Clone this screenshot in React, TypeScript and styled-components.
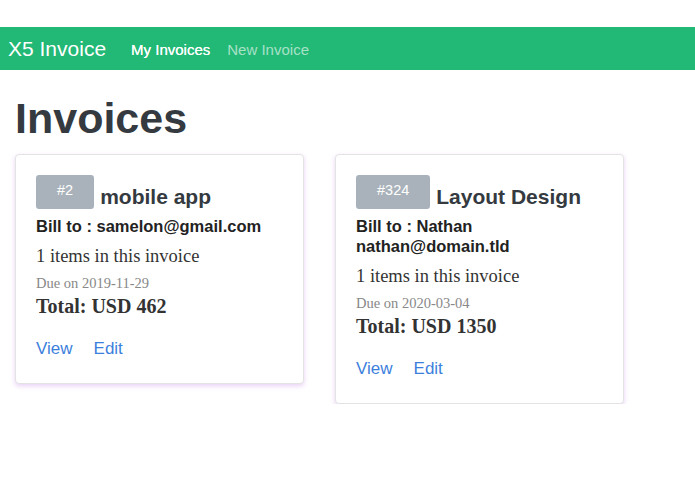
import React from 'react'
import styled, {createGlobalStyle} from 'styled-components'

const GlobalStyle = createGlobalStyle`
  body {
    margin: 0;
    background: #fff;
    font-family: "Liberation Sans", Arial, sans-serif;
  }
`
const Page = styled.div`
  padding-top: 27px;
`
const NavBar = styled.nav`
  display: flex;
  align-items: center;
  height: 43px;
  padding: 0 8px;
  background-color: #22b875;
`
const Brand = styled.span`
  font-size: 21px;
  color: #fff;
  margin-right: 25px;
`
const NavLink = styled.a<{ $active?: boolean }>`
  font-size: 15px;
  color: ${p => (p.$active ? '#fff' : 'rgba(255, 255, 255, 0.6)')};
  text-shadow: ${p => (p.$active ? '0 0 0.4px #fff' : 'none')};
  text-decoration: none;
  margin-right: 17px;
  padding-top: 1px;
`
const Heading = styled.h1`
  margin: 23px 0 9px 15px;
  font-size: 43px;
  line-height: 1.2;
  font-weight: bold;
  color: #343a40;
`
const CardList = styled.div`
  display: flex;
  align-items: flex-start;
  gap: 31px;
  padding-left: 15px;
`
const Card = styled.div`
  width: 289px;
  box-sizing: border-box;
  padding: 20px 20px 24px;
  border: 1px solid #e3e3e3;
  border-radius: 4px;
  background: #fff;
  box-shadow: 0 2px 5px rgba(200, 140, 230, 0.4);
`
const CardHeader = styled.div`
  display: flex;
  align-items: flex-end;
  gap: 6px;
`
const Badge = styled.span`
  display: inline-flex;
  align-items: center;
  height: 34px;
  padding: 0 21px 3px;
  border-radius: 3px;
  background-color: #a9b2ba;
  color: #fff;
  font-size: 14.5px;
  box-sizing: border-box;
`
const Title = styled.span`
  font-size: 21px;
  line-height: 24px;
  font-weight: bold;
  color: #343a40;
`
const BillTo = styled.div`
  margin-top: 7px;
  font-size: 16.5px;
  line-height: 20px;
  font-weight: bold;
  color: #222;
`
const Items = styled.div`
  margin-top: 9px;
  font-family: "Liberation Serif", Georgia, serif;
  font-size: 18.5px;
  line-height: 22px;
  color: #333;
`
const Due = styled.div`
  margin-top: 7px;
  font-family: "Liberation Serif", Georgia, serif;
  font-size: 14.5px;
  line-height: 18px;
  color: #888;
`
const Total = styled.div`
  margin-top: 2px;
  font-family: "Liberation Serif", Georgia, serif;
  font-size: 20px;
  line-height: 24px;
  font-weight: bold;
  color: #333;
`
const Actions = styled.div`
  display: flex;
  gap: 21px;
  margin-top: 21px;
`
const ActionLink = styled.a`
  font-size: 17px;
  line-height: 20px;
  color: #3d7fdc;
  text-decoration: none;
`

type Invoice = {
  id: number
  title: string
  billTo: string
  items: number
  due: string
  total: number
}

const invoices: Invoice[] = [
  {id: 2, title: 'mobile app', billTo: 'samelon@gmail.com', items: 1, due: '2019-11-29', total: 462},
  {id: 324, title: 'Layout Design', billTo: 'Nathan nathan@domain.tld', items: 1, due: '2020-03-04', total: 1350},
]

const InvoiceCard: React.FC<{ invoice: Invoice }> = ({invoice}) => (
  <Card>
    <CardHeader>
      <Badge>#{invoice.id}</Badge>
      <Title>{invoice.title}</Title>
    </CardHeader>
    <BillTo>Bill to : {invoice.billTo}</BillTo>
    <Items>{invoice.items} items in this invoice</Items>
    <Due>Due on {invoice.due}</Due>
    <Total>Total: USD {invoice.total}</Total>
    <Actions>
      <ActionLink href="#">View</ActionLink>
      <ActionLink href="#">Edit</ActionLink>
    </Actions>
  </Card>
)

export default function App() {
  return (
    <Page>
      <GlobalStyle />
      <NavBar>
        <Brand>X5 Invoice</Brand>
        <NavLink $active href="#">My Invoices</NavLink>
        <NavLink href="#">New Invoice</NavLink>
      </NavBar>
      <Heading>Invoices</Heading>
      <CardList>
        {invoices.map(inv => <InvoiceCard key={inv.id} invoice={inv} />)}
      </CardList>
    </Page>
  )
}
